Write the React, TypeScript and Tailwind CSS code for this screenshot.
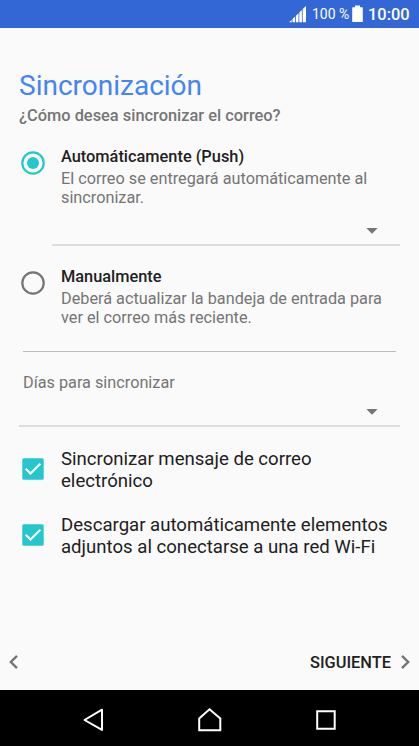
import type { ReactNode } from "react";

function StatusBar() {
  return (
    <header className="flex h-7 items-center bg-[#3367d6] pl-[289px] text-white">
      <svg width="18" height="18" viewBox="0 0 18 18" fill="currentColor" className="shrink-0">
        <path d="M0 17.3L2.7 14.9V17.3zM3.5 17.3V14.1L6.1 11.5V17.3zM6.9 17.3V10.7L9.5 8.2V17.3zM10.3 17.3V7.4L12.9 4.9V17.3zM13.7 17.3V4.1L17 1V17.3z" />
      </svg>
      <span className="ml-[5px] w-10 whitespace-nowrap text-[14px] leading-7">100 %</span>
      <svg width="11" height="18" viewBox="0 0 11 18" fill="currentColor" className="shrink-0">
        <path d="M3 0.5h5v1.8h2.2a.6.6 0 0 1 .6.6v13.5a.6.6 0 0 1-.6.6H.8a.6.6 0 0 1-.6-.6V2.9a.6.6 0 0 1 .6-.6H3z" />
      </svg>
      <span className="ml-[5px] pt-px whitespace-nowrap text-[16.4px] leading-7 font-medium">10:00</span>
    </header>
  );
}

function Radio({ checked = false }: { checked?: boolean }) {
  return (
    <svg
      width="24"
      height="24"
      viewBox="0 0 24 24"
      fill="none"
      className={checked ? "shrink-0 text-[#26c6d0]" : "shrink-0 text-[#757575]"}
    >
      <circle cx="12" cy="12" r="10.7" stroke="currentColor" strokeWidth="2.2" />
      {checked && <circle cx="12" cy="12" r="6" fill="currentColor" />}
    </svg>
  );
}

function Option({
  title,
  checked,
  children,
}: {
  title: string;
  checked?: boolean;
  children: ReactNode;
}) {
  return (
    <div className="flex gap-4 pl-[21px]">
      <div className="pt-[3.5px]">
        <Radio checked={checked} />
      </div>
      <div className="leading-[19px] whitespace-nowrap text-[#757575]">
        <p className="text-[16.35px] font-medium text-[#212121]">{title}</p>
        <p className="mt-[3px] text-[16.25px]">{children}</p>
      </div>
    </div>
  );
}

function Spinner({ className }: { className: string }) {
  return (
    <div className={`flex justify-end border-b-2 border-[#dddddd] pr-[22px] ${className}`}>
      <svg width="12" height="6" viewBox="0 0 12 6" fill="#757575">
        <path d="M.3 0h11.4L6 5.8z" />
      </svg>
    </div>
  );
}

function Check({ children }: { children: ReactNode }) {
  return (
    <div className="flex gap-[17px] pl-[22px]">
      <svg width="22" height="22" viewBox="0 0 22 22" fill="none" className="mt-2.5 shrink-0">
        <rect x="0.3" y="0.3" width="21.4" height="21.4" rx="1.5" fill="#26c6d0" />
        <path d="M3.7 10.7l4.8 4.8L18.3 5.7" stroke="#fff" strokeWidth="2.1" />
      </svg>
      <p className="text-[18.6px] leading-[22px] whitespace-nowrap text-[#212121]">{children}</p>
    </div>
  );
}

function NavBar() {
  return (
    <nav className="flex h-14 items-center bg-black pl-[81px]">
      <svg width="256" height="28" viewBox="0 0 256 28" fill="none" stroke="#fff" strokeWidth="2">
        <path d="M21 5.7v20.2L3.5 16z" strokeLinejoin="round" />
        <path d="M118.2 26.2V14.5l10.3-9.2 10.8 9.2v11.7z" />
        <path d="M236.2 7.2h17.5v17.5h-17.5z" />
      </svg>
    </nav>
  );
}

export default function App() {
  return (
    <div className="flex h-[746px] w-[419px] flex-col overflow-hidden bg-[#fafafa] font-[Roboto,sans-serif]">
      <StatusBar />
      <main className="flex flex-1 flex-col">
        <div className="mt-[42px] pl-[19px]">
          <h1 className="text-[28px] leading-8 text-[#4285f4]">Sincronización</h1>
          <p className="mt-[4px] text-[16.4px] leading-[19px] font-medium text-[#757575]">
            ¿Cómo desea sincronizar el correo?
          </p>
        </div>

        <div className="mt-[22px]">
          <Option title="Automáticamente (Push)" checked>
            El correo se entregará automáticamente al
            <br />
            sincronizar.
          </Option>
        </div>
        <Spinner className="mr-[19px] ml-[52px] pt-[21px] pb-[10px]" />

        <div className="mt-[21px]">
          <Option title="Manualmente">
            Deberá actualizar la bandeja de entrada para
            <br />
            ver el correo más reciente.
          </Option>
        </div>
        <hr className="mt-[24px] mr-[23px] ml-[23px] border-[#bdbdbd]" />

        <p className="mt-[21px] pl-[23px] text-[16.25px] leading-[19px] text-[#757575]">Días para sincronizar</p>
        <Spinner className="mr-[19px] ml-[19px] pt-[17px] pb-[10px]" />

        <div className="mt-[21px] flex flex-col gap-[22px]">
          <Check>
            Sincronizar mensaje de correo
            <br />
            electrónico
          </Check>
          <Check>
            Descargar automáticamente elementos
            <br />
            adjuntos al conectarse a una red Wi-Fi
          </Check>
        </div>

        <footer className="mt-auto mb-[16px] flex items-center justify-between pr-[8px] pl-[8px]">
          <svg width="12" height="16" viewBox="0 0 12 16" fill="none" stroke="#757575" strokeWidth="2.4">
            <path d="M9 1.8L2.8 8L9 14.2" />
          </svg>
          <div className="flex items-center gap-[9px]">
            <span className="pt-[2px] text-[16.4px] leading-[22px] font-medium text-[#212121]">SIGUIENTE</span>
            <svg width="11" height="16" viewBox="0 0 11 16" fill="none" stroke="#757575" strokeWidth="2.4">
              <path d="M2 1.8L8.2 8L2 14.2" />
            </svg>
          </div>
        </footer>
      </main>
      <NavBar />
    </div>
  );
}
